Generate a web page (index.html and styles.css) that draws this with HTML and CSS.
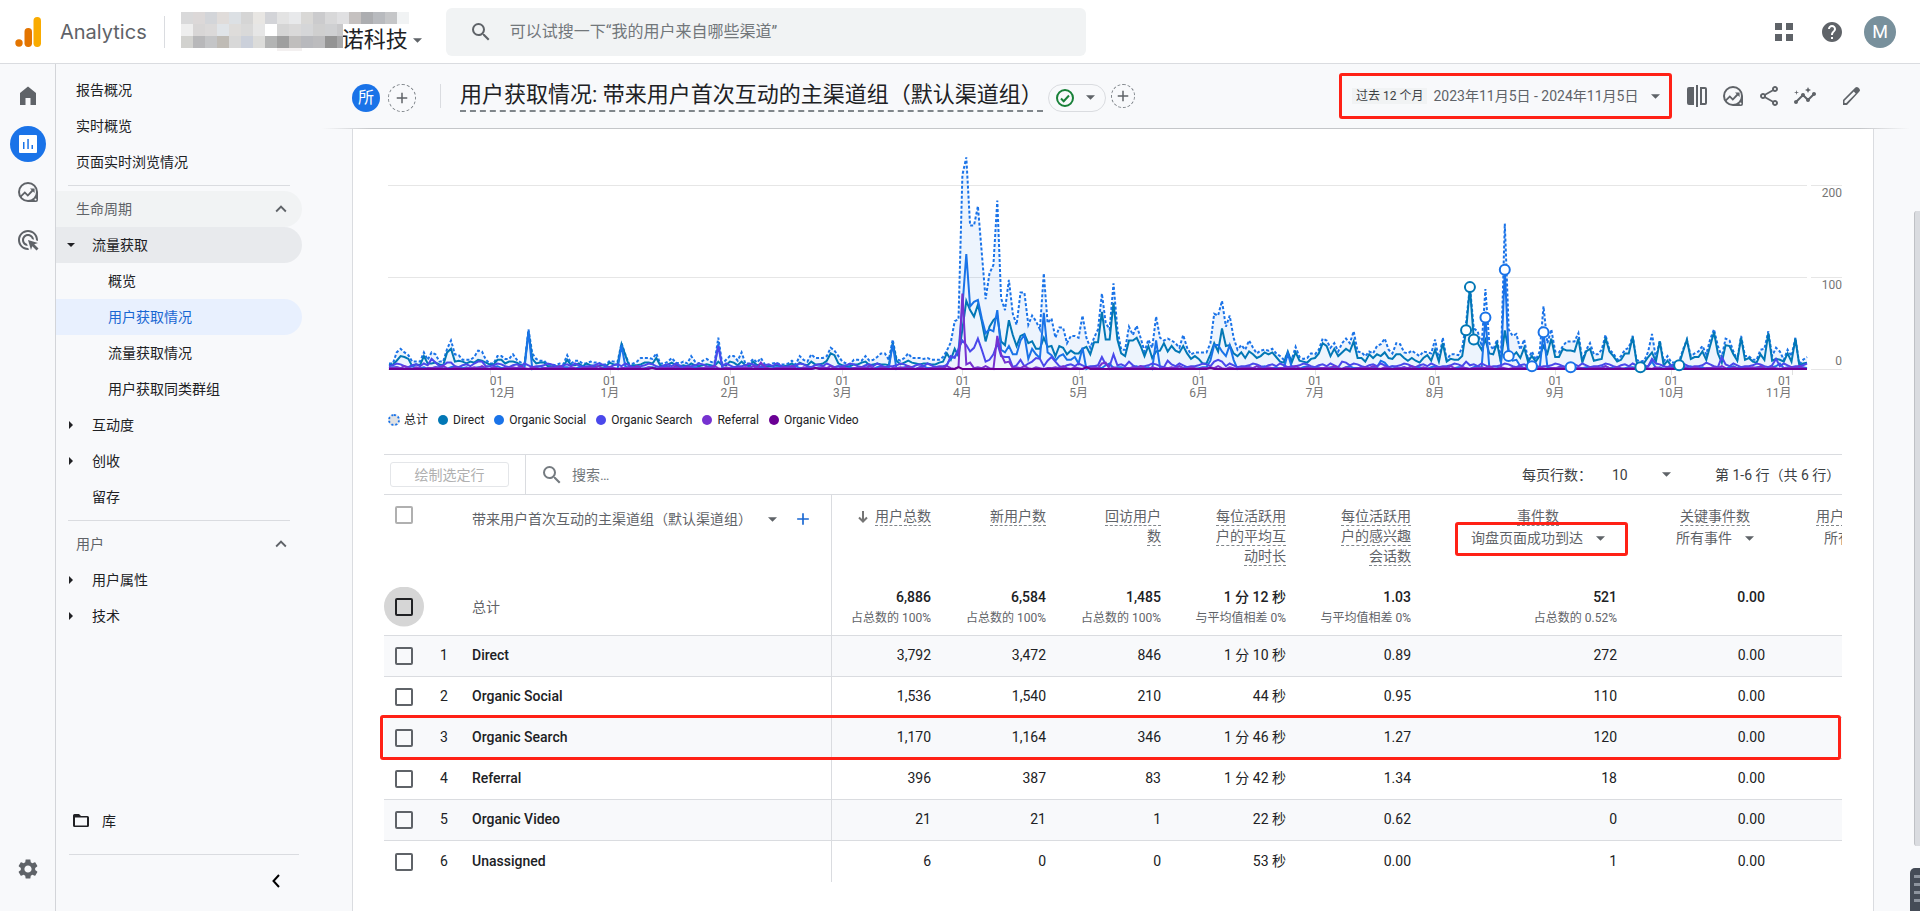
FILE: index.html
```html
<!DOCTYPE html>
<html lang="zh-CN">
<head>
    <meta charset="UTF-8">
    <meta name="viewport" content="width=device-width, initial-scale=1.0">
    <title>Analytics</title>
    <link rel="stylesheet" href="styles.css">
</head>
<body>
    <!-- shared icons -->
    <svg class="sprite" aria-hidden="true">
        <symbol id="i-caret" viewBox="0 0 10 5"><path d="M0 0h10L5 5z"/></symbol>
        <symbol id="i-search" viewBox="0 0 24 24"><path d="M15.5 14h-.79l-.28-.27A6.47 6.47 0 0 0 16 9.5 6.5 6.5 0 1 0 9.5 16c1.61 0 3.09-.59 4.23-1.57l.27.28v.79l5 4.99L20.49 19l-4.99-5zm-6 0C7.01 14 5 11.99 5 9.5S7.01 5 9.5 5 14 7.01 14 9.5 11.99 14 9.5 14z"/></symbol>
        <symbol id="i-plus" viewBox="0 0 24 24"><path d="M19 13h-6v6h-2v-6H5v-2h6V5h2v6h6z"/></symbol>
        <symbol id="i-up" viewBox="0 0 24 24"><path d="M12 8l-6 6 1.41 1.41L12 10.83l4.59 4.58L18 14z"/></symbol>
        <symbol id="i-explore" viewBox="0 0 24 24"><path fill-rule="evenodd" d="M12 2a10 10 0 1 0 0 20h8a2 2 0 0 0 2-2v-8A10 10 0 0 0 12 2zm0 2a8 8 0 1 1 0 16 8 8 0 0 1 0-16zm7.5 14.6a1 1 0 1 1 0 2 1 1 0 0 1 0-2z"/><path d="M4.5 15.5l4.3-4.3 3 3L15.6 10 14 8.4h4.6V13L17 11.4l-5.2 5.3-3-3-3.6 3.6z"/></symbol>
    </svg>

    <header class="topbar">
        <svg class="logo" viewBox="0 0 26 30"><circle cx="4" cy="26" r="3.7" fill="#e37400"/><rect x="9.500" y="11" width="7.500" height="19" rx="3.700" fill="#e37400"/><rect x="18.500" y="0" width="7.500" height="30" rx="3.700" fill="#f9ab00"/></svg>
        <span class="product">Analytics</span>
        <button class="account" type="button">
            <svg class="mosaic" id="mosaic" viewBox="0 0 228 40" shape-rendering="crispEdges"></svg>
            <span class="account-name">诺科技</span>
            <svg class="caret"><use href="#i-caret"/></svg>
        </button>
        <label class="search">
            <svg class="icon"><use href="#i-search"/></svg>
            <input type="text" aria-label="搜索" placeholder="可以试搜一下“我的用户来自哪些渠道”">
        </label>
        <div class="top-actions">
            <button type="button" aria-label="应用"><svg class="icon" viewBox="0 0 24 24"><path d="M3 3h7v7H3zM14 3h7v7h-7zM3 14h7v7H3zM14 14h7v7h-7z"/></svg></button>
            <button type="button" aria-label="帮助"><svg class="icon" viewBox="0 0 24 24"><path d="M12 2C6.480 2 2 6.480 2 12s4.480 10 10 10 10-4.480 10-10S17.520 2 12 2zm1 17h-2v-2h2v2zm2.070-7.750l-.9.920C13.450 12.900 13 13.500 13 15h-2v-.5c0-1.100.450-2.100 1.170-2.830l1.240-1.260c.370-.360.590-.860.590-1.410 0-1.100-.9-2-2-2s-2 .9-2 2H8c0-2.210 1.790-4 4-4s4 1.790 4 4c0 .880-.360 1.680-.930 2.250z"/></svg></button>
            <button type="button" class="avatar">M</button>
        </div>
    </header>

    <div class="layout">
        <nav class="rail" aria-label="主导航">
            <a href="#" aria-label="首页"><svg class="icon" viewBox="0 0 24 24"><path d="M4 21V9l8-6.500L20 9v12h-5.500v-7h-5v7z"/></svg></a>
            <a href="#" class="active" aria-label="报告"><svg class="icon" viewBox="0 0 24 24"><path fill-rule="evenodd" d="M4 3h16a1 1 0 0 1 1 1v16a1 1 0 0 1-1 1H4a1 1 0 0 1-1-1V4a1 1 0 0 1 1-1zm3 7v7h1.500v-7zm4.300-3v10h1.500V7zm4.200 6v4H17v-4z"/></svg></a>
            <a href="#" aria-label="探索"><svg class="icon"><use href="#i-explore"/></svg></a>
            <a href="#" aria-label="广告"><svg class="icon" viewBox="0 0 24 24"><path d="M11.710 17.990C8.530 17.840 6 15.220 6 12c0-3.310 2.690-6 6-6 3.220 0 5.840 2.530 5.990 5.710l-2.100-.630C15.480 9.310 13.890 8 12 8c-2.210 0-4 1.790-4 4 0 1.890 1.310 3.480 3.080 3.890l.630 2.100zM22 12c0 .3-.010.6-.040.9l-1.970-.590c.010-.1.010-.210.010-.310 0-4.420-3.580-8-8-8s-8 3.580-8 8 3.580 8 8 8c.1 0 .210 0 .310-.010l.590 1.970c-.3.030-.6.040-.9.040-5.520 0-10-4.480-10-10S6.480 2 12 2s10 4.480 10 10zm-3.770 4.260L22 15l-10-3 3 10 1.260-3.770 4.270 4.270 1.980-1.980-4.280-4.260z"/></svg></a>
            <a href="#" class="settings" aria-label="管理"><svg class="icon" viewBox="0 0 24 24"><path d="M19.140 12.940c.040-.3.060-.610.060-.940 0-.320-.020-.640-.070-.940l2.030-1.580c.180-.140.230-.410.120-.610l-1.920-3.320c-.120-.220-.370-.290-.590-.220l-2.390.960c-.5-.380-1.030-.7-1.620-.940l-.360-2.540c-.040-.240-.240-.410-.480-.410h-3.840c-.240 0-.430.170-.470.410l-.360 2.540c-.590.240-1.130.570-1.620.940l-2.390-.960c-.220-.080-.470 0-.590.220L2.740 8.870c-.120.210-.080.470.120.610l2.030 1.580c-.050.3-.090.630-.090.940s.020.640.070.940l-2.030 1.580c-.180.140-.230.410-.120.610l1.920 3.320c.120.220.370.290.590.220l2.390-.960c.5.380 1.030.7 1.620.940l.360 2.540c.050.240.240.410.480.410h3.840c.240 0 .440-.170.470-.410l.360-2.540c.590-.240 1.130-.560 1.620-.940l2.390.960c.220.080.470 0 .590-.220l1.920-3.320c.120-.220.070-.470-.120-.610l-2.010-1.580zM12 15.600c-1.980 0-3.600-1.620-3.600-3.600s1.620-3.600 3.600-3.600 3.600 1.620 3.600 3.600-1.620 3.600-3.600 3.600z"/></svg></a>
        </nav>

        <nav class="side" aria-label="报告导航">
            <a href="#">报告概况</a>
            <a href="#">实时概览</a>
            <a href="#">页面实时浏览情况</a>
            <hr>
            <button type="button" class="group hover">生命周期<svg class="icon"><use href="#i-up"/></svg></button>
            <a href="#" class="l1 open">流量获取</a>
            <a href="#" class="l2">概览</a>
            <a href="#" class="l2 current">用户获取情况</a>
            <a href="#" class="l2">流量获取情况</a>
            <a href="#" class="l2">用户获取同类群组</a>
            <a href="#" class="l1 closed">互动度</a>
            <a href="#" class="l1 closed">创收</a>
            <a href="#" class="l1">留存</a>
            <hr>
            <button type="button" class="group">用户<svg class="icon"><use href="#i-up"/></svg></button>
            <a href="#" class="l1 closed">用户属性</a>
            <a href="#" class="l1 closed">技术</a>
            <div class="side-footer">
                <a href="#"><svg class="folder" viewBox="0 0 16 13"><path fill-rule="evenodd" d="M1.500 0H6l2 2h6.500A1.500 1.500 0 0 1 16 3.500v8a1.500 1.500 0 0 1-1.500 1.500h-13A1.500 1.500 0 0 1 0 11.500v-10A1.500 1.500 0 0 1 1.500 0zM2 3.500v8h12v-8z"/></svg>库</a>
                <button type="button" class="collapse" aria-label="收起"><svg viewBox="0 0 8 14"><path d="M7 1L1.500 7 7 13" fill="none" stroke="#000" stroke-width="2"/></svg></button>
            </div>
        </nav>

        <main>
            <div class="report-bar">
                <button type="button" class="segment">所</button>
                <button type="button" class="add" aria-label="添加比较"><svg><use href="#i-plus"/></svg></button>
                <span class="bar-sep"></span>
                <h1>用户获取情况: 带来用户首次互动的主渠道组（默认渠道组）</h1>
                <button type="button" class="quality" aria-label="数据质量">
                    <svg class="check-mark" viewBox="0 0 18 18"><circle cx="9" cy="9" r="8" fill="none" stroke="#188038" stroke-width="2"/><path d="M5 9.500l2.700 2.700L13 6.500" fill="none" stroke="#188038" stroke-width="2"/></svg>
                    <svg class="caret"><use href="#i-caret"/></svg>
                </button>
                <button type="button" class="add small" aria-label="添加过滤条件"><svg><use href="#i-plus"/></svg></button>

                <button type="button" class="date-range">
                    <span class="preset">过去 12 个月</span>
                    <span class="dates">2023年11月5日 - 2024年11月5日</span>
                    <svg class="caret"><use href="#i-caret"/></svg>
                </button>
                <div class="report-tools">
                    <button type="button" aria-label="比较"><svg class="icon" viewBox="0 0 24 24"><path fill-rule="evenodd" d="M4 3h5v18H4a2 2 0 0 1-2-2V5a2 2 0 0 1 2-2zM11 1h2v22h-2zM15 3h5a2 2 0 0 1 2 2v14a2 2 0 0 1-2 2h-5zm2 2v14h3V5z"/></svg></button>
                    <button type="button" aria-label="数据分析"><svg class="icon"><use href="#i-explore"/></svg></button>
                    <button type="button" aria-label="分享"><svg class="icon" viewBox="0 0 24 24"><path d="M18 16c-.790 0-1.500.310-2.030.810L8.910 12.700c.050-.230.090-.460.090-.7s-.040-.470-.090-.7l7.050-4.110c.530.500 1.250.810 2.040.810 1.660 0 3-1.340 3-3s-1.340-3-3-3-3 1.340-3 3c0 .240.040.480.090.7L8.040 9.810C7.500 9.310 6.790 9 6 9c-1.660 0-3 1.340-3 3s1.340 3 3 3c.790 0 1.500-.310 2.040-.810l7.050 4.120c-.050.220-.090.450-.090.690 0 1.660 1.340 3 3 3s3-1.340 3-3-1.340-3-3-3zm0-12c.550 0 1 .450 1 1s-.450 1-1 1-1-.450-1-1 .450-1 1-1zM6 13c-.550 0-1-.450-1-1s.450-1 1-1 1 .450 1 1-.450 1-1 1zm12 7c-.550 0-1-.450-1-1s.450-1 1-1 1 .450 1 1-.450 1-1 1z"/></svg></button>
                    <button type="button" aria-label="洞见"><svg class="icon" viewBox="0 0 24 24"><path d="M21 8c-1.450 0-2.260 1.440-1.930 2.510l-3.550 3.560c-.3-.090-.740-.090-1.040 0l-2.550-2.550C12.270 10.450 11.460 9 10 9c-1.450 0-2.270 1.440-1.930 2.520l-4.560 4.550C2.440 15.740 1 16.550 1 18c0 1.100.9 2 2 2 1.450 0 2.260-1.440 1.930-2.510l4.550-4.560c.3.090.740.090 1.040 0l2.550 2.550C12.730 16.550 13.540 18 15 18c1.450 0 2.270-1.440 1.930-2.520l3.560-3.550c1.070.330 2.510-.480 2.510-1.930 0-1.100-.9-2-2-2zM15 9l.940-2.070L18 6l-2.060-.930L15 3l-.920 2.070L12 6l2.080.930zM3.500 11L4 9l2-.5L4 8l-.5-2L3 8l-2 .5L3 9z"/></svg></button>
                    <button type="button" class="edit" aria-label="编辑"><svg class="icon" viewBox="0 0 24 24"><path fill-rule="evenodd" d="M20.400 4.800l-1.200-1.200a2 2 0 0 0-2.800 0L4 16v5h4L20.400 7.600a2 2 0 0 0 0-2.800zM7.200 19H5.500v-2.200l9.300-9.300 1.900 1.900z"/></svg></button>
                </div>
            </div>

            <section class="card">
                <svg class="chart" id="chart" role="img" aria-label="用户总数"></svg>
                <ul class="legend">
                    <li class="total">总计</li>
                    <li class="direct">Direct</li>
                    <li class="social">Organic Social</li>
                    <li class="organic">Organic Search</li>
                    <li class="referral">Referral</li>
                    <li class="video">Organic Video</li>
                </ul>

                <div class="table-bar">
                    <div class="plot-cell"><button type="button" class="plot-rows" disabled>绘制选定行</button></div>
                    <label class="table-search"><svg class="icon"><use href="#i-search"/></svg><input type="text" aria-label="搜索表格" placeholder="搜索…"></label>
                    <label class="page-label" for="pageSize">每页行数：</label>
                    <span class="pick page-size"><select id="pageSize"><option>10</option></select><svg class="caret"><use href="#i-caret"/></svg></span>
                    <span class="page-info">第 1-6 行（共 6 行）</span>
                </div>

                <table>
                    <colgroup>
                        <col class="c-check"><col class="c-num"><col><col class="c-users"><col class="c-mid"><col class="c-mid">
                        <col class="c-wide"><col class="c-wide"><col class="c-events"><col class="c-key"><col class="c-last">
                    </colgroup>
                    <thead>
                        <tr>
                            <th class="check head"><input type="checkbox" aria-label="全选"></th>
                            <th></th>
                            <th class="name">
                                <div class="dimension"><span>带来用户首次互动的主渠道组（默认渠道组）</span><svg class="caret"><use href="#i-caret"/></svg><button type="button" aria-label="添加维度"><svg><use href="#i-plus"/></svg></button></div>
                            </th>
                            <th><svg class="sort" viewBox="0 0 10 12"><path d="M5 0v11M1 6.500l4 4 4-4" fill="none" stroke="#757575" stroke-width="2"/></svg><span class="term">用户总数</span></th>
                            <th><span class="term">新用户数</span></th>
                            <th><span class="term">回访用户<br>数</span></th>
                            <th><span class="term">每位活跃用<br>户的平均互<br>动时长</span></th>
                            <th><span class="term">每位活跃用<br>户的感兴趣<br>会话数</span></th>
                            <th class="with-pick"><span class="term">事件数</span><span class="pick marked"><select aria-label="事件数"><option>询盘页面成功到达</option></select><svg class="caret"><use href="#i-caret"/></svg></span></th>
                            <th class="with-pick"><span class="term">关键事件数</span><span class="pick"><select aria-label="关键事件数"><option>所有事件</option></select><svg class="caret"><use href="#i-caret"/></svg></span></th>
                            <th class="cut"><span class="term">用户关键事件率</span><span class="pick"><select aria-label="用户关键事件率"><option>所有事件</option></select></span></th>
                        </tr>
                    </thead>
                    <tbody>
                        <tr class="sum">
                            <td class="check hot"><input type="checkbox" aria-label="总计"></td><td></td><td class="name">总计</td>
                            <td><b>6,886</b><small>占总数的 100%</small></td>
                            <td><b>6,584</b><small>占总数的 100%</small></td>
                            <td><b>1,485</b><small>占总数的 100%</small></td>
                            <td><b>1 分 12 秒</b><small>与平均值相差 0%</small></td>
                            <td><b>1.03</b><small>与平均值相差 0%</small></td>
                            <td><b>521</b><small>占总数的 0.52%</small></td>
                            <td><b>0.00</b></td><td></td>
                        </tr>
                        <tr><td class="check"><input type="checkbox" aria-label="Direct"></td><td>1</td><td class="name">Direct</td><td>3,792</td><td>3,472</td><td>846</td><td>1 分 10 秒</td><td>0.89</td><td>272</td><td>0.00</td><td></td></tr>
                        <tr><td class="check"><input type="checkbox" aria-label="Organic Social"></td><td>2</td><td class="name">Organic Social</td><td>1,536</td><td>1,540</td><td>210</td><td>44 秒</td><td>0.95</td><td>110</td><td>0.00</td><td></td></tr>
                        <tr class="marked"><td class="check"><input type="checkbox" aria-label="Organic Search"><span class="row-mark"></span></td><td>3</td><td class="name">Organic Search</td><td>1,170</td><td>1,164</td><td>346</td><td>1 分 46 秒</td><td>1.27</td><td>120</td><td>0.00</td><td></td></tr>
                        <tr><td class="check"><input type="checkbox" aria-label="Referral"></td><td>4</td><td class="name">Referral</td><td>396</td><td>387</td><td>83</td><td>1 分 42 秒</td><td>1.34</td><td>18</td><td>0.00</td><td></td></tr>
                        <tr><td class="check"><input type="checkbox" aria-label="Organic Video"></td><td>5</td><td class="name">Organic Video</td><td>21</td><td>21</td><td>1</td><td>22 秒</td><td>0.62</td><td>0</td><td>0.00</td><td></td></tr>
                        <tr><td class="check"><input type="checkbox" aria-label="Unassigned"></td><td>6</td><td class="name">Unassigned</td><td>6</td><td>0</td><td>0</td><td>53 秒</td><td>0.00</td><td>1</td><td>0.00</td><td></td></tr>
                    </tbody>
                </table>
            </section>
            <div class="scroll-thumb"></div>
            <div class="float-tab"><i></i><i></i><i></i><i></i></div>
        </main>
    </div>
    <script src="chart.js"></script>
</body>
</html>
```

FILE: styles.css
```css
*, ::before, ::after {
    box-sizing: border-box;
}
body {
    margin: 0;
    height: 100vh;
    display: flex;
    flex-direction: column;
    overflow: hidden;
    background: #f8f9fb;
    color: #202124;
    font: 14px/20px Roboto, "Noto Sans CJK SC", sans-serif;
}
button, input, select {
    font: inherit;
    color: inherit;
    border: 0;
    padding: 0;
    margin: 0;
    background: none;
}
button {
    display: inline-flex;
    align-items: center;
    justify-content: center;
    cursor: pointer;
}
a {
    color: inherit;
    text-decoration: none;
}
svg {
    fill: currentColor;
    flex: none;
}
.sprite {
    position: absolute;
    width: 0;
    height: 0;
}
.icon {
    width: 24px;
    height: 24px;
    display: block;
}
.caret {
    width: 9px;
    height: 5px;
    color: #5f6368;
}

/* top bar */
.topbar {
    height: 64px;
    flex: none;
    display: flex;
    align-items: center;
    background: #fff;
    border-bottom: 1px solid #dadce0;
    padding: 0 24px 0 15px;
}
.logo {
    width: 26px;
    height: 30px;
}
.product {
    font: 20px/32px Inter, Roboto, sans-serif;
    color: #5f6368;
    margin-left: 19px;
    padding-right: 17px;
    border-right: 1px solid #dadce0;
}
.account {
    position: relative;
    height: 40px;
    margin-left: 16px;
    padding: 2px 0 0 161px;
}
.mosaic {
    position: absolute;
    left: 0;
    top: 0;
    width: 228px;
    height: 40px;
}
.account-name {
    font-size: 22px;
    line-height: 32px;
    padding-top: 14px;
}
.account .caret {
    margin: 16px 0 0 5px;
}
.search {
    flex: 0 1 640px;
    height: 48px;
    margin-left: 24px;
    padding-left: 23px;
    display: flex;
    align-items: center;
    gap: 17px;
    background: #f1f3f4;
    border-radius: 6px;
    color: #5f6368;
}
.search input {
    flex: 1;
    font-size: 16px;
    outline: 0;
}
.search input::placeholder, .table-search input::placeholder {
    color: #72777b;
    opacity: 1;
}
.top-actions {
    margin-left: auto;
    display: flex;
    align-items: center;
    gap: 24px;
    color: #5f6368;
}
.top-actions .avatar {
    width: 32px;
    height: 32px;
    margin-left: -4px;
    border-radius: 50%;
    background: #78909c;
    color: #fff;
    font-size: 18px;
}

/* left rail */
.layout {
    flex: 1;
    min-height: 0;
    display: flex;
}
.rail {
    width: 56px;
    flex: none;
    border-right: 1px solid #d3d5d9;
    padding: 8px 0 18px;
    display: flex;
    flex-direction: column;
    align-items: center;
    color: #5f6368;
}
.rail a {
    width: 36px;
    height: 36px;
    margin: 6px 0;
    border-radius: 50%;
    display: flex;
    align-items: center;
    justify-content: center;
}
.rail .active {
    background: #1a73e8;
    color: #fff;
}
.rail .settings {
    margin-top: auto;
}

/* report navigation */
.side {
    width: 246px;
    flex: none;
    padding-top: 8px;
    display: flex;
    flex-direction: column;
}
.side a, .side .group {
    position: relative;
    height: 36px;
    flex: none;
    padding-left: 20px;
    padding-bottom: 1px;
    display: flex;
    align-items: center;
    justify-content: flex-start;
    border-radius: 0 18px 18px 0;
}
.side .l1 {
    padding-left: 36px;
}
.side .l2 {
    padding-left: 52px;
}
.side .group {
    color: #5f6368;
    padding-right: 10px;
}
.side .group .icon {
    margin-left: auto;
    width: 22px;
}
.side .hover {
    background: #f1f3f4;
}
.side .open {
    background: #e8eaed;
}
.side .current {
    background: #e8f0fe;
    color: #1967d2;
}
.side .open::before, .side .closed::before {
    content: "";
    position: absolute;
    left: 11px;
    border: 4px solid transparent;
    border-top-color: #202124;
    border-bottom: 0;
}
.side .closed::before {
    left: 13px;
    border: 4px solid transparent;
    border-left-color: #202124;
    border-right: 0;
}
.side hr {
    width: 222px;
    margin: 5px 12px;
    border: 0;
    border-top: 1px solid #dadce0;
}
.side-footer {
    margin-top: auto;
}
.side-footer a {
    padding-left: 17px;
    gap: 13px;
    margin-bottom: 15px;
}
.folder {
    width: 16px;
    height: 13px;
}
.collapse {
    display: flex;
    justify-content: flex-end;
    width: 230px;
    height: 57px;
    margin-left: 13px;
    padding: 0 19px 5px 0;
    border-top: 1px solid #dadce0;
}
.collapse svg {
    width: 8px;
    height: 14px;
}

/* report title bar */
main {
    position: relative;
    flex: 1;
    min-width: 0;
    display: flex;
    flex-direction: column;
}
.report-bar {
    position: relative;
    height: 65px;
    flex: none;
    display: flex;
    align-items: center;
    padding: 0 57px 1px 50px;
    color: #5f6368;
}
.report-bar::after {
    content: "";
    position: absolute;
    left: 20px;
    right: 10px;
    bottom: 0;
    height: 1px;
    background: linear-gradient(90deg, transparent, #c4c6c9 50px, #c4c6c9 calc(100% - 50px), transparent);
}
.segment {
    width: 28px;
    height: 28px;
    margin-top: 4px;
    border-radius: 50%;
    background: #1a73e8;
    color: #fff;
    font-size: 16px;
}
.add {
    width: 28px;
    height: 28px;
    margin: 4px 0 0 8px;
    border: 1px dashed #80868b;
    border-radius: 50%;
    flex: none;
}
.add svg {
    width: 18px;
    height: 18px;
}
.add.small {
    width: 24px;
    height: 24px;
    margin: 0 0 0 5px;
}
.bar-sep {
    width: 1px;
    height: 24px;
    margin: 0 19px 0 24px;
    background: #dadce0;
}
h1 {
    margin: 0;
    font-size: 22px;
    line-height: 30px;
    font-weight: 400;
    color: #202124;
    white-space: nowrap;
    border-bottom: 2px dashed #80868b;
}
.quality {
    width: 58px;
    height: 28px;
    margin: 3px 0 0 5px;
    padding-right: 2px;
    gap: 12px;
    border: 1px solid #dadce0;
    border-radius: 14px;
}
.check-mark {
    width: 18px;
    height: 18px;
}
.date-range {
    width: 333px;
    height: 46px;
    margin-left: auto;
    padding: 0 10px;
    justify-content: flex-start;
    border: 3px solid #ff2116;
    border-radius: 3px;
    white-space: nowrap;
}
.preset {
    padding: 0 4px;
    margin-right: 6px;
    font-size: 12px;
    line-height: 16px;
    background: #f1f3f4;
    color: #3c4043;
}
.date-range .caret {
    margin-left: 13px;
}
.report-tools {
    display: flex;
    gap: 12px;
    margin-left: 13px;
}
.report-tools .edit {
    margin-left: 10px;
}

/* card and chart */
.card {
    flex: 1;
    min-height: 0;
    overflow: hidden;
    margin: 0 46px 0 50px;
    padding: 0 31px;
    background: #fff;
    border: solid #dadce0;
    border-width: 0 1px;
}
.chart {
    display: block;
    width: calc(100% - 4px);
    height: 283px;
    margin-left: 4px;
    overflow: visible;
    font-size: 12px;
}
.chart text {
    fill: #757575;
}
.legend {
    display: flex;
    gap: 10px;
    height: 16px;
    margin: 0 0 26px 4px;
    padding: 0;
    list-style: none;
    font-size: 12px;
    line-height: 16px;
}
.legend li {
    display: flex;
    align-items: center;
    gap: 5px;
}
.legend li::before {
    content: "";
    width: 10px;
    height: 10px;
    border-radius: 50%;
    background: #0277b5;
}
.legend .total {
    gap: 4px;
}
.legend .total::before {
    background: #e0e2e5;
    border: 2px dotted #1a73e8;
    width: 12px;
    height: 12px;
}
.legend .social::before {
    background: #1a73e8;
}
.legend .organic::before {
    background: #4a48eb;
}
.legend .referral::before {
    background: #7632d0;
}
.legend .video::before {
    background: #6a0094;
}

/* table toolbar */
.table-bar {
    display: flex;
    align-items: center;
    height: 41px;
    border: solid #dadce0;
    border-width: 1px 0;
    color: #3c4043;
}
.plot-cell {
    width: 142px;
    height: 100%;
    padding: 7px 0 0 6px;
    border-right: 1px solid #dadce0;
}
.plot-rows {
    width: 119px;
    height: 25px;
    border: 1px solid #e4e6e9;
    border-radius: 3px;
    color: #b0b0b0;
}
.table-search {
    flex: 1;
    display: flex;
    align-items: center;
    gap: 8px;
    padding-left: 14px;
    color: #757b80;
}
.table-search input {
    flex: 1;
    outline: 0;
}
.pick {
    display: inline-flex;
    align-items: center;
}
.pick select {
    appearance: none;
    cursor: pointer;
    outline: 0;
}
.page-size {
    gap: 34px;
    margin: 0 44px 0 20px;
}
.page-info {
    width: 127px;
    white-space: nowrap;
}

/* table */
table {
    width: 100%;
    table-layout: fixed;
    border-collapse: separate;
    border-spacing: 0;
}
.c-check {
    width: 40px;
}
.c-num {
    width: 32px;
}
.c-users, .c-mid {
    width: 115px;
}
.c-wide {
    width: 125px;
}
.c-events {
    width: 206px;
}
.c-key {
    width: 148px;
}
.c-last {
    width: 61px;
}
th {
    height: 81px;
    padding: 11px 16px 0 0;
    vertical-align: top;
    text-align: right;
    font-weight: 400;
    color: #5f6368;
    white-space: nowrap;
}
td {
    height: 41px;
    padding: 0 16px 2px 0;
    text-align: right;
    border-bottom: 1px solid #dadce0;
}
tbody tr:nth-child(even) td {
    background: #f8f9fb;
}
tbody tr:last-child td {
    border-bottom: 0;
}
td:nth-child(2) {
    padding-left: 8px;
    padding-right: 0;
    text-align: center;
}
.name, td.name {
    padding-left: 16px;
    text-align: left;
    border-right: 1px solid #dadce0;
    font-weight: 500;
}
th.name, .sum td.name {
    font-weight: 400;
    color: #5f6368;
}
.check, td.check {
    padding: 0;
    text-align: center;
}
th.check {
    padding-top: 11px;
}
.check input {
    appearance: none;
    display: block;
    width: 18px;
    height: 18px;
    margin: 0 auto;
    border: 2px solid #5f6368;
    border-radius: 2px;
}
.head input {
    border-color: #b0b0b0;
}
.hot input {
    border-color: #202124;
    box-shadow: 0 0 0 11px #d6d6d6;
    background: #d6d6d6;
    clip-path: circle(20px);
}
.dimension {
    display: flex;
    align-items: center;
    margin-top: 3px;
}
.dimension .caret {
    margin: 0 16px;
}
.dimension button svg {
    width: 20px;
    height: 20px;
    color: #1967d2;
}
.term {
    padding-bottom: 1px;
    border-bottom: 1px dashed #80868b;
}
.sort {
    width: 10px;
    height: 12px;
    margin-right: 7px;
    vertical-align: -2px;
}
.with-pick {
    text-align: center;
    padding-right: 0;
    padding-left: 16px;
}
.with-pick .pick, .cut .pick {
    display: flex;
    justify-content: center;
    gap: 13px;
    margin-top: 2px;
}
.pick.marked {
    position: relative;
}
.pick.marked::after {
    content: "";
    position: absolute;
    inset: -6px 5px -8px 12px;
    border: 3px solid #ff2116;
    border-radius: 3px;
    pointer-events: none;
}
.cut {
    overflow: hidden;
    text-align: left;
    padding-right: 0;
    padding-left: 35px;
}
.cut .pick {
    justify-content: flex-start;
    padding-left: 8px;
}
.sum td {
    height: 60px;
    padding-top: 11px;
    padding-bottom: 0;
    vertical-align: top;
}
.sum td.name, .sum td.check {
    padding-top: 2px;
    vertical-align: middle;
}
.sum b {
    display: block;
    font-weight: 500;
}
.sum small {
    display: block;
    margin-top: 1px;
    font-size: 12px;
    color: #5f6368;
    white-space: nowrap;
}
tr.marked {
    position: relative;
}
.row-mark {
    position: absolute;
    inset: -3px 1px -1px -4px;
    border: 3px solid #ff2116;
    border-radius: 3px;
    pointer-events: none;
}

/* page edge */
.scroll-thumb {
    position: absolute;
    right: 0;
    top: 147px;
    width: 6px;
    height: 75%;
    background: #dadce0;
    border-left: 1px solid #bfc1c5;
    border-radius: 3px 0 0 3px;
}
.float-tab {
    position: absolute;
    right: 0;
    bottom: 0;
    width: 10px;
    height: 43px;
    padding: 7px 0 0 4px;
    background: #454c57;
    border-radius: 5px 0 0 0;
}
.float-tab i {
    display: block;
    height: 3px;
    margin-bottom: 5px;
    background: #8d949e;
}
```

FILE: chart.js
```js
// Daily users, 2023-11-05 .. 2024-11-05
const total = [
    6,6,18,22,18,15,8,8,8,18,10,18,16,8,8,22,31,16,15,10,10,10,13,20,19,10,6,6,14,14,11,11,16,10,7,6,43,17,11,9,
    9,5,5,4,6,5,15,6,9,9,6,6,8,7,7,5,5,9,8,8,28,16,5,6,8,12,12,12,11,17,6,6,8,12,7,6,8,6,14,8,
    6,9,11,8,6,34,6,10,14,14,9,18,6,6,11,7,12,5,4,6,7,5,5,6,9,5,14,10,8,16,12,12,12,14,23,20,14,8,6,5,
    10,10,9,14,9,10,13,17,17,10,32,11,9,12,17,12,12,12,11,12,10,10,10,13,20,29,52,54,211,230,156,156,177,126,76,104,113,183,77,64,
    97,60,48,83,83,48,58,52,43,104,50,55,34,45,45,28,36,36,34,58,34,23,34,43,82,50,43,93,43,21,21,46,37,47,34,19,32,23,57,34,
    31,33,31,28,23,37,23,16,18,18,18,18,28,60,58,74,46,58,34,21,26,21,31,23,17,20,21,20,22,17,14,10,17,10,24,13,11,12,17,16,
    21,33,31,23,28,19,28,33,28,41,19,18,14,19,17,25,27,33,21,17,28,27,18,17,20,17,14,19,18,17,32,10,34,10,16,16,15,23,50,90,
    44,41,25,87,28,21,32,8,158,43,36,38,21,32,10,19,10,19,68,28,43,19,18,25,30,30,30,39,10,21,28,16,16,21,37,21,17,10,14,21,
    23,36,10,8,9,19,38,12,31,8,14,7,7,8,21,32,14,17,19,25,16,32,43,25,13,33,31,19,10,36,14,14,10,10,21,22,41,14,23,19,
    10,21,14,34,5,10,13
];

const direct = [
    4,5,9,14,13,11,3,5,4,14,6,6,7,5,4,18,22,8,9,8,6,8,7,10,9,7,5,5,10,10,6,8,8,7,4,5,40,11,6,7,
    7,3,3,3,3,3,10,4,4,6,3,6,4,3,3,4,3,7,5,5,27,15,3,4,4,5,7,7,6,12,4,3,5,7,4,3,4,3,6,4,
    3,4,5,4,3,8,4,4,8,7,4,8,4,3,8,4,5,3,3,3,4,3,3,4,6,3,7,5,4,8,5,5,6,9,17,15,6,4,3,3,
    5,5,7,8,4,5,6,5,5,4,28,9,5,7,9,7,6,5,6,6,5,5,7,8,17,10,22,14,43,74,64,57,70,52,30,46,53,57,30,26,
    53,37,25,36,38,28,30,22,22,34,24,25,14,25,23,16,20,17,17,22,24,16,29,29,62,32,32,72,32,17,14,31,31,34,25,14,25,12,19,20,
    28,19,25,20,18,25,17,11,14,11,6,6,16,28,19,44,25,26,17,14,18,12,19,16,12,14,18,16,18,13,8,7,19,7,18,9,8,7,11,12,
    17,28,25,14,22,14,18,22,19,30,12,12,8,16,12,16,14,18,12,11,16,16,12,9,12,9,7,12,15,9,21,8,28,8,11,10,10,14,42,89,
    32,28,21,32,17,16,28,7,42,19,14,18,12,23,8,14,8,14,25,17,33,13,13,22,20,20,19,33,7,19,22,9,10,11,34,19,14,8,10,17,
    17,35,8,2,7,13,18,8,30,4,9,3,4,5,19,32,11,13,13,19,10,25,40,17,7,26,25,16,9,34,10,12,8,7,16,10,39,9,11,10,
    8,17,8,33,4,6,7
];

// Low-volume channels: a repeating base with the days that stand out
function channel(base, peaks) {
    const values = total.map((t, i) => base[i % base.length]);
    for (const day in peaks) {
        values[day] = peaks[day];
    }
    return values;
}

const social = channel([1, 2, 2, 1, 0, 2, 3, 1, 1, 2, 0], {
    36: 41, 60: 26, 85: 27, 130: 27, 144: 5, 145: 12, 146: 13, 147: 20, 148: 67, 149: 125, 150: 68, 151: 73, 152: 75, 153: 55,
    154: 39, 155: 43, 156: 41, 157: 64, 158: 21, 159: 18, 160: 25, 161: 16, 162: 16, 163: 31, 164: 37, 165: 11,
    166: 22, 167: 16, 168: 12, 169: 61, 170: 18, 171: 15, 172: 9, 173: 14, 174: 16, 175: 10, 176: 10, 177: 13,
    178: 6, 179: 23, 185: 4, 186: 6, 198: 31, 212: 9, 213: 26, 214: 26, 215: 19, 216: 14, 217: 26, 218: 10, 232: 17, 256: 9, 257: 7,
    283: 56, 288: 108, 289: 14, 290: 9, 291: 10, 295: 3, 298: 40, 305: 2, 326: 8, 359: 6
});
const organic = channel([3, 4, 6, 5, 3, 2, 4, 5, 3, 6, 4, 2, 3], {
    11: 11, 12: 7, 15: 7, 16: 7, 23: 8, 24: 8, 85: 25, 145: 14, 146: 12, 147: 22, 148: 31, 149: 26, 150: 19, 151: 23, 152: 33,
    153: 21, 154: 8, 155: 10, 156: 16, 157: 28, 158: 14, 159: 13, 160: 13, 163: 10, 166: 8, 167: 12, 168: 11,
    170: 9, 171: 13, 172: 8, 184: 13, 187: 16, 191: 8, 201: 9, 213: 8, 214: 10, 215: 8, 246: 8, 247: 7, 278: 8,
    326: 11, 340: 7, 344: 13, 358: 11
});
const referral = channel([1, 1, 2, 1, 3, 1, 0, 2, 1, 0], {
    96: 7, 148: 82, 149: 5, 150: 7, 157: 36, 158: 16, 159: 7, 160: 8, 184: 6, 185: 7
});
const video = channel([0], { 68: 1, 110: 1, 147: 2, 180: 2, 212: 1 });

// [day, value, colour]
const anomalies = [
    [278, 42, '#0277b5'], [279, 89, '#0277b5'], [280, 32, '#0277b5'], [283, 56, '#1a73e8'], [288, 108, '#1a73e8'],
    [289, 14, '#1a73e8'], [295, 3, '#1a73e8'], [298, 40, '#1a73e8'], [305, 2, '#1a73e8'], [323, 2, '#0277b5'], [333, 4, '#0277b5']
];
const months = [
    [26, '12月'], [57, '1月'], [88, '2月'], [117, '3月'], [148, '4月'], [178, '5月'],
    [209, '6月'], [239, '7月'], [270, '8月'], [301, '9月'], [331, '10月'], [362, '11月']
];

function drawChart() {
    const svg = document.getElementById('chart');
    const width = svg.clientWidth;
    const right = width - 35;
    const x = day => 1 + day * (right - 1) / (total.length - 1);
    const y = value => 240 - value * 0.92;
    const points = values => values.map((v, i) => `${x(i).toFixed(1)},${y(v).toFixed(1)}`).join(' ');
    const line = (values, colour) => `<polyline points="${points(values)}" fill="none" stroke="${colour}" stroke-width="2"/>`;
    let out = '';

    for (const v of [200, 100, 0]) {
        out += `<path d="M0 ${y(v) + 0.5}H${right}M${right + 4} ${y(v) + 0.5}H${width}" stroke="#e6e6e6"/>`;
        out += `<text x="${width}" y="${v ? y(v) + 12 : 236}" text-anchor="end">${v}</text>`;
    }
    months.forEach(([day, name], i) => {
        const anchor = i === 0 ? 'start' : i === months.length - 1 ? 'end' : 'middle';
        out += `<path d="M${Math.round(x(day)) + 0.5} 240v6" stroke="#e0e0e0"/>`;
        out += `<text x="${x(day)}" y="256" text-anchor="${anchor}">01</text>`;
        out += `<text x="${x(day)}" y="268" text-anchor="${anchor}">${name}</text>`;
    });

    out += `<polygon points="0,240 ${points(total)} ${right},240" fill="#1a73e8" fill-opacity="0.08"/>`;
    out += `<polyline points="${points(total)}" fill="none" stroke="#1a73e8" stroke-width="2" stroke-dasharray="3 2"/>`;
    out += line(direct, '#0277b5') + line(social, '#1a73e8') + line(organic, '#4a48eb');
    out += line(referral, '#7632d0') + line(video, '#6a0094');
    for (const [day, v, colour] of anomalies) {
        out += `<circle cx="${x(day)}" cy="${y(v)}" r="5" fill="#fff" stroke="${colour}" stroke-width="2"/>`;
    }
    svg.innerHTML = out;
}

// Blurred-out account name; the lower rows stop half a block short
const blocks = [
    'd9d9da dcd8d8 d3d5d9 e0dcda dce0e4 d5d5d5 e8e6e3 d3d4d8 e3e3e3 e8e9eb d9d8d6 cbcbcd d8d8d9 e0e0e2 c5c1c0 acadb0 b8babe c5c6c8 f1f3f4',
    'eeeeee d8d6d6 dbd9d9 e0e4e8 dedcda d9d9d9 e6e6e6 ffffff d5d5d5 dad9d9 d5d6d8 cfcfcf cfd0d2 c8c8ca',
    'd2d2cf b8b8ba c4c5c7 bfbbb5 d8d8d8 cbd0da dcdcda b3b4b4 9f9f9f c0bebd b8b9bd bcbcbe 949494 a8a8a9'
];
document.getElementById('mosaic').innerHTML = blocks.map((row, r) =>
    row.split(' ').map((c, i) => `<rect x="${i * 12}" y="${r * 12}" width="${r && i === 13 ? 6 : 12}" height="12" fill="#${c}"/>`).join('')
).join('') + '<rect x="96" y="36" width="25" height="3" fill="#f3f0f0"/>';

drawChart();
window.addEventListener('resize', drawChart);
```
